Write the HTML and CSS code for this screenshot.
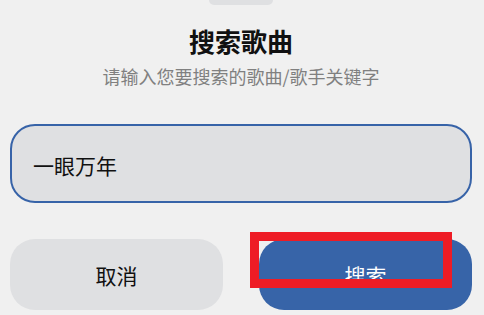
FILE: index.html
```html
<!DOCTYPE html>
<html lang="zh-CN">
<head>
<meta charset="utf-8">
<title>搜索歌曲</title>
<link rel="stylesheet" href="styles.css">
</head>
<body>
<div class="sheet">
  <div class="handle"></div>
  <h1 class="title">搜索歌曲</h1>
  <p class="subtitle">请输入您要搜索的歌曲/歌手关键字</p>
  <div class="field"><span class="field-text">一眼万年</span></div>
  <div class="actions">
    <button class="btn btn-cancel">取消</button>
    <button class="btn btn-search">搜索<span class="highlight"></span></button>
  </div>
</div>
</body>
</html>
```
FILE: styles.css
```css
html, body {
  margin: 0;
  padding: 0;
  background: #f0f0f0;
  width: 484px;
  height: 315px;
  overflow: hidden;
}
body {
  font-family: "Noto Sans CJK SC", "Noto Sans", sans-serif;
}
.sheet {
  display: flex;
  flex-direction: column;
  padding: 0 12px 0 10px;
}
.handle {
  align-self: center;
  width: 64px;
  height: 5px;
  background: #dfe0e2;
  border-radius: 0 0 6px 6px;
}
.title {
  margin: 21px 0 0;
  font-size: 26px;
  line-height: 30px;
  font-weight: 700;
  color: #111;
  text-align: center;
}
.subtitle {
  margin: 8px 0 0;
  font-size: 18px;
  line-height: 24px;
  color: #808080;
  text-align: center;
}
.field {
  margin-top: 36px;
  height: 79px;
  box-sizing: border-box;
  border: 2.5px solid #3763a8;
  border-radius: 25px;
  background: #dfe0e2;
  display: flex;
  align-items: center;
  padding: 3px 20px 0 21px;
}
.field-text {
  font-size: 21px;
  color: #111;
}
.actions {
  margin-top: 36px;
  display: flex;
  gap: 36px;
}
.btn {
  position: relative;
  flex: 1;
  height: 71px;
  border: none;
  border-radius: 25px;
  font-family: inherit;
  font-size: 21px;
  padding: 0;
}
.btn-cancel {
  background: #dfe0e2;
  color: #111;
}
.btn-search {
  background: #3764a8;
  color: #fff;
}
.highlight {
  position: absolute;
  left: -9px;
  top: -7px;
  width: 202px;
  height: 56px;
  box-sizing: border-box;
  border: 9px solid #ee1c25;
}
```
